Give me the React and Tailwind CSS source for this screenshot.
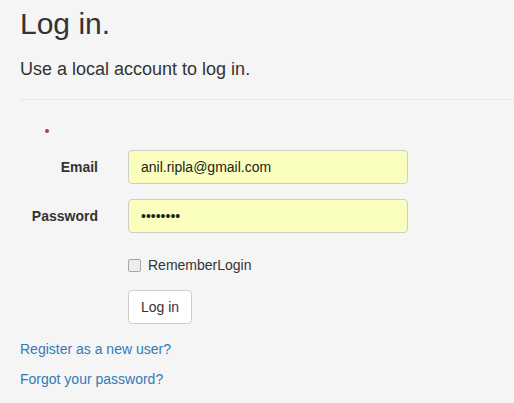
import { useState } from 'react';

const LoginPage = () => {
  const [email, setEmail] = useState('anil.ripla@gmail.com');
  const [password, setPassword] = useState('12345678');
  const [remember, setRemember] = useState(false);

  return (
    <div className="min-h-[403px] bg-[#f5f5f5] pl-[20px] pt-[7px] text-[14px] text-[#333] font-['Liberation_Sans',Arial,sans-serif]">
      <h2 className="text-[30px] leading-[33px] font-normal">Log in.</h2>
      <h4 className="mt-[19px] text-[18px] leading-[20px] font-normal">Use a local account to log in.</h4>
      <hr className="mt-[20px] border-t border-[#e8e8e8]" />

      {/* Validation summary */}
      <div className="pl-[25px] pt-[29px]">
        <span className="block w-[4px] h-[4px] rounded-full bg-[#a94442]"></span>
      </div>

      <form className="mt-[17px]" onSubmit={(e) => e.preventDefault()}>
        <div className="flex items-center gap-[30px]">
          <label className="w-[78px] text-right font-bold leading-[20px]">Email</label>
          <input
            type="text"
            value={email}
            onChange={(e) => setEmail(e.target.value)}
            className="w-[280px] h-[34px] px-[12px] border border-[#ccc] rounded-[4px] bg-[#faffbd] text-[14px] text-[#222] outline-none"
          />
        </div>

        <div className="mt-[15px] flex items-center gap-[30px]">
          <label className="w-[78px] text-right font-bold leading-[20px]">Password</label>
          <input
            type="password"
            value={password}
            onChange={(e) => setPassword(e.target.value)}
            className="w-[280px] h-[34px] px-[12px] border border-[#ccc] rounded-[4px] bg-[#faffbd] text-[14px] text-[#222] outline-none"
          />
        </div>

        <div className="mt-[15px] ml-[108px] h-[27px] pt-[7px] flex items-center">
          <label className="flex items-center leading-[20px] cursor-pointer" onClick={() => setRemember(!remember)}>
            <span className="w-[13px] h-[13px] border border-[#a6a6a6] rounded-[2px] bg-[#ededed]">
              {remember && (
                <svg viewBox="0 0 13 13" className="w-full h-full">
                  <path d="M3 6.5 L5.5 9 L10 3.5" stroke="#333" strokeWidth="1.5" fill="none" />
                </svg>
              )}
            </span>
            <span className="ml-[7px]">RememberLogin</span>
          </label>
        </div>

        <div className="mt-[15px] ml-[108px]">
          <button
            type="submit"
            className="h-[34px] px-[12px] bg-white border border-[#ccc] rounded-[4px] text-[14px] text-[#333] leading-[20px]"
          >
            Log in
          </button>
        </div>
      </form>

      <p className="mt-[15px] leading-[20px]">
        <a href="#" className="text-[#337ab7]">Register as a new user?</a>
      </p>
      <p className="mt-[10px] leading-[20px]">
        <a href="#" className="text-[#337ab7]">Forgot your password?</a>
      </p>
    </div>
  );
};

export default function App() {
  return <LoginPage />;
}
